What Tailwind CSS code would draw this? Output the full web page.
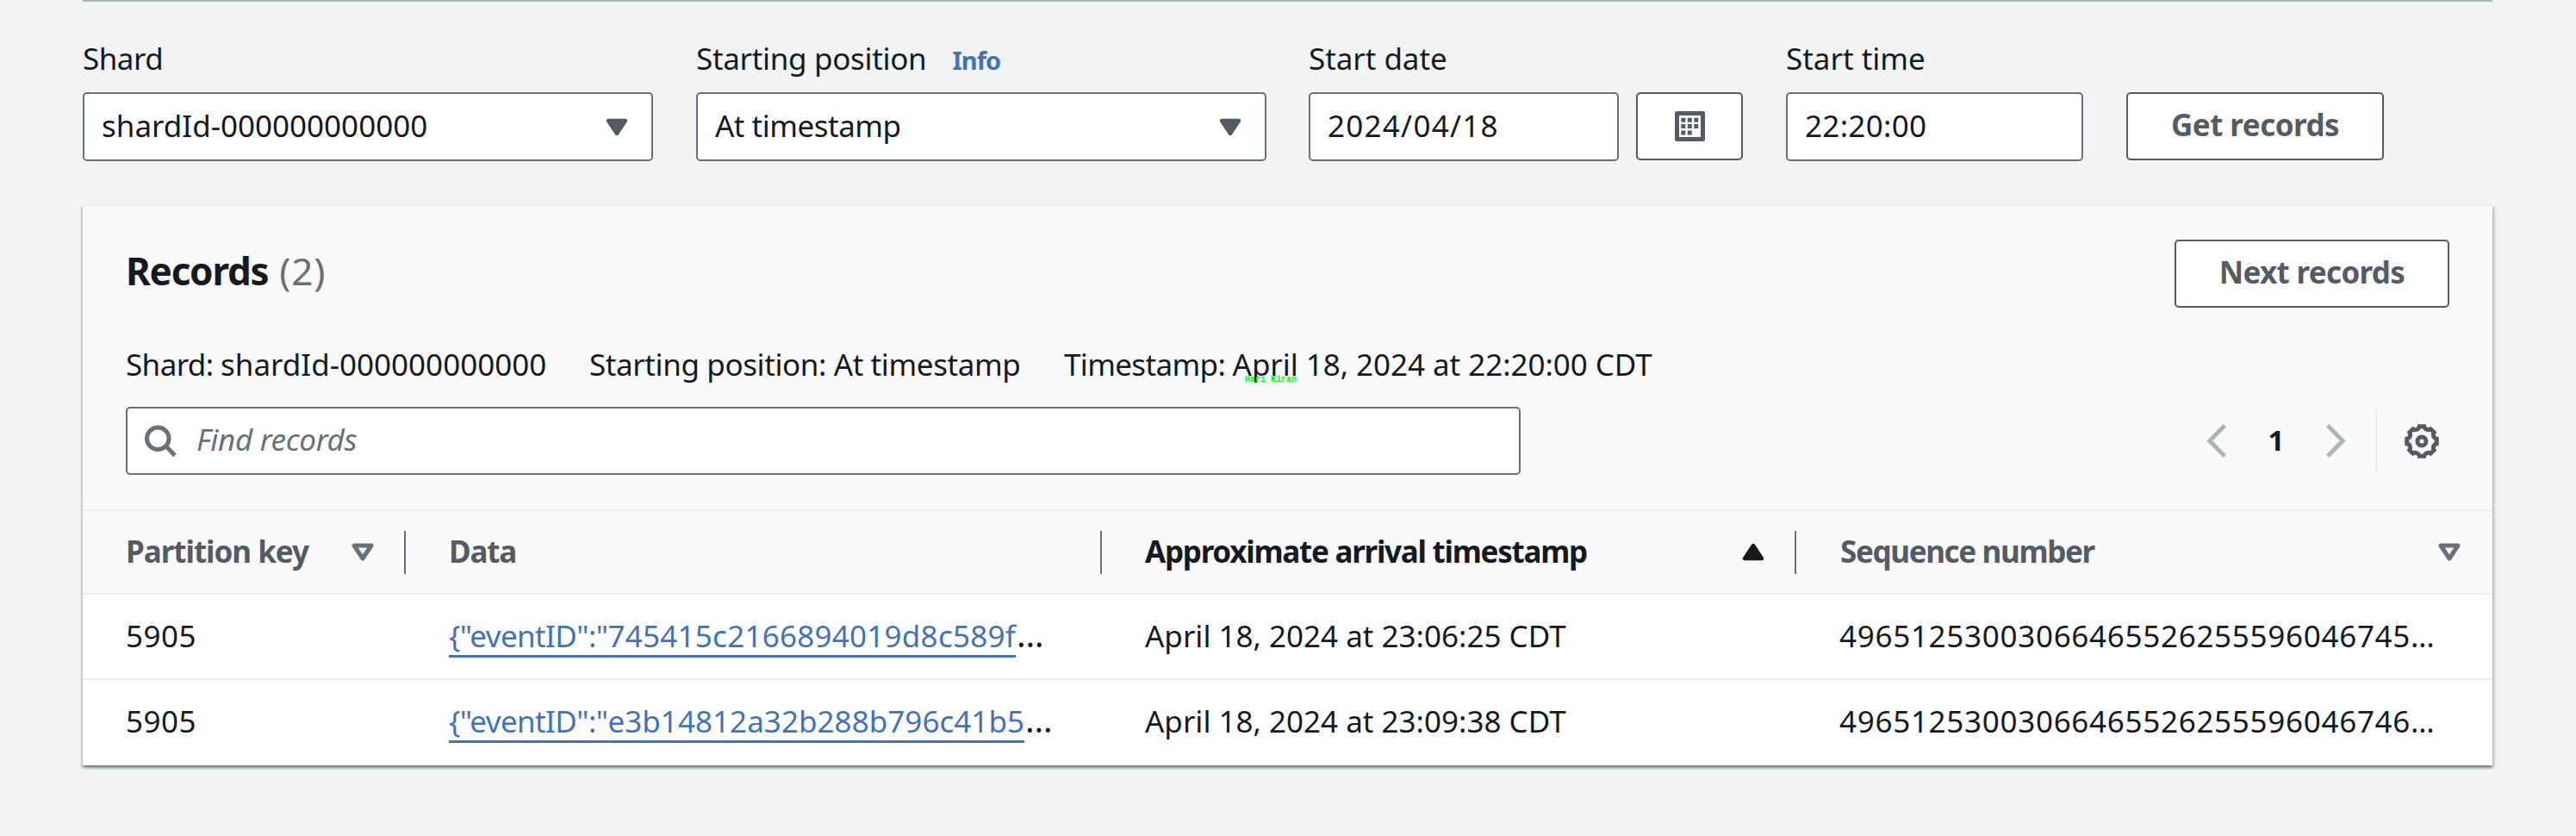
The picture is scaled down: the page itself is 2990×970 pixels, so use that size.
<!DOCTYPE html>
<html lang="en">
<head>
<meta charset="utf-8">
<title>Records</title>
<script src="https://cdn.jsdelivr.net/npm/@tailwindcss/browser@4"></script>
</head>
<body class="min-h-[970px] w-[2990px] overflow-hidden bg-[#f2f4f3] px-24 font-['Noto_Sans',sans-serif] text-[35px] leading-[44px] text-[#16191f]">
<svg class="hidden">
  <symbol id="tri" viewBox="0 0 26 21"><path d="M3 3h20L13 18z" fill="currentColor" stroke="currentColor" stroke-width="4.5" stroke-linejoin="round"/></symbol>
  <symbol id="tri-up" viewBox="0 0 26 21"><path d="M3 18h20L13 3z" fill="currentColor" stroke="currentColor" stroke-width="4.5" stroke-linejoin="round"/></symbol>
  <symbol id="tri-open" viewBox="0 0 26 21"><path d="M3 3h20L13 18z" fill="none" stroke="currentColor" stroke-width="5" stroke-linejoin="round"/></symbol>
</svg>
<main class="w-[2797px] whitespace-nowrap border-t-2 border-[#aab7b8]">

  <!-- Query form -->
  <form class="flex h-[185px] items-end">
    <div class="w-[662px]">
      <label class="block h-[44px] tracking-[-0.5px]">Shard</label>
      <div class="mt-[17px] flex h-20 items-center justify-between rounded-[5px] border-2 border-[#687078] bg-white pl-[20px] pr-[27px]">
        <span class="pb-[2px]">shardId-000000000000</span>
        <svg class="h-[21px] w-[26px] text-[#545b64]"><use href="#tri"/></svg>
      </div>
    </div>
    <div class="ml-[50px] w-[662px]">
      <label class="flex h-[44px] items-baseline"><span class="tracking-[-0.32px]">Starting position</span><a class="ml-[30px] text-[29px] font-bold leading-[30px] tracking-[-0.9px] text-[#4472b6]">Info</a></label>
      <div class="mt-[17px] flex h-20 items-center justify-between rounded-[5px] border-2 border-[#687078] bg-white pl-[20px] pr-[27px]">
        <span class="pb-[2px] tracking-[-0.5px]">At timestamp</span>
        <svg class="h-[21px] w-[26px] text-[#545b64]"><use href="#tri"/></svg>
      </div>
    </div>
    <div class="ml-[49px]">
      <label class="block h-[44px] tracking-[-0.05px]">Start date</label>
      <div class="mt-[17px] flex gap-5">
        <div class="flex h-20 w-[360px] items-center rounded-[5px] border-2 border-[#687078] bg-white pl-[20px]"><span class="pb-[2px] tracking-[1.26px]">2024/04/18</span></div>
        <div class="flex h-[79px] w-[124px] items-center justify-center rounded-[5px] border-2 border-[#545b64] bg-white">
          <svg class="h-[35px] w-[35px] text-[#545b64]" viewBox="0 0 35 35" fill="currentColor">
            <path fill-rule="evenodd" d="M2 0h31a2 2 0 0 1 2 2v31a2 2 0 0 1-2 2H2a2 2 0 0 1-2-2V2a2 2 0 0 1 2-2zM5 5v25h25V5z"/>
            <path d="M7.3 7.7h5v5h-5zM14.8 7.7h5v5h-5zM22.3 7.7h5v5h-5zM7.3 15.1h5v5h-5zM14.8 15.1h5v5h-5zM22.3 15.1h5v5h-5zM7.3 22.6h5v5h-5zM14.8 22.6h5v5h-5z"/>
          </svg>
        </div>
      </div>
    </div>
    <div class="ml-[50px] w-[345px]">
      <label class="block h-[44px]">Start time</label>
      <div class="mt-[17px] flex h-20 items-center rounded-[5px] border-2 border-[#687078] bg-white pl-[20px]"><span class="pb-[2px] tracking-[0.3px]">22:20:00</span></div>
    </div>
    <button type="button" class="mb-px ml-[50px] flex h-[79px] w-[299px] items-center justify-center rounded-[5px] border-2 border-[#545b64] bg-white pb-[3px] font-bold tracking-[-0.54px] text-[#545b64]">Get records</button>
  </form>

  <!-- Records table -->
  <section class="mt-[50px] border-t-2 border-[#eaeded] bg-white shadow-[0_2.5px_2.5px_0_rgba(0,28,36,0.3),2.5px_2.5px_2.5px_0_rgba(0,28,36,0.15),-2.5px_2.5px_2.5px_0_rgba(0,28,36,0.15)]">
    <header class="border-b-2 border-[#eaeded] bg-[#fafafa] px-[50px] pb-10 pt-[39px]">
      <div class="flex h-[79px] items-center justify-between">
        <h2 class="flex items-baseline pb-[8px] text-[44px] font-bold tracking-[-1.24px]">Records<span class="ml-[13px] font-normal tracking-[0.8px] text-[#687078]">(2)</span></h2>
        <button type="button" class="flex h-[79px] w-[319px] items-center justify-center rounded-[5px] border-2 border-[#545b64] bg-white pb-[3px] font-bold tracking-[-0.68px] text-[#545b64]">Next records</button>
      </div>
      <div class="mt-[44px] flex">
        <span class="w-[538px]"><span class="tracking-[-0.6px]">Shard: </span>shardId-000000000000</span>
        <span class="w-[551px] tracking-[-0.4px]">Starting position: At timestamp</span>
        <span class="relative tracking-[-0.05px]"><span class="tracking-[-0.65px]">Timestamp: </span>April 18, 2024 at 22:20:00 CDT
          <span class="absolute left-[210px] top-[35px] font-['Liberation_Mono',monospace] text-[10px] font-bold leading-[10px] tracking-normal text-[#00ff00]">Hari Kiran</span>
        </span>
      </div>
      <div class="mt-[27px] flex h-[79px] items-center">
        <div class="flex h-[79px] w-[1619px] items-center rounded-[5px] border-2 border-[#687078] bg-white pl-[20px] text-[#687078]">
          <svg class="h-[38px] w-[38px]" viewBox="0 0 38 38" fill="none" stroke="currentColor" stroke-width="5"><circle cx="15.3" cy="15.7" r="12.8"/><path d="M24.5 24.5L35 35.5"/></svg>
          <span class="ml-[22px] pb-[3px] italic tracking-[-0.33px]">Find records</span>
        </div>
        <div class="ml-auto flex h-[79px] items-center pr-[12px]">
          <svg class="h-[39px] w-[23px] text-[#aab7b8]" viewBox="0 0 23 39" fill="none" stroke="currentColor" stroke-width="5"><path d="M21.3 1.7L3.8 19.5l17.5 17.8"/></svg>
          <span class="w-[116px] pb-[2px] text-center text-[33px] font-bold">1</span>
          <svg class="h-[39px] w-[23px] text-[#aab7b8]" viewBox="0 0 23 39" fill="none" stroke="currentColor" stroke-width="5"><path d="M1.7 1.7l17.5 17.8L1.7 37.3"/></svg>
          <span class="ml-[34px] h-[78px] w-[2px] bg-[#eaeded]"></span>
          <svg class="ml-[32px] h-10 w-10 text-[#545b64]" viewBox="0 0 40 40" fill="none" stroke="currentColor" stroke-width="5">
            <path d="M37.28 22.74A5 5 0 0 0 34.16 30.29L30.29 34.16A5 5 0 0 0 22.74 37.28L17.26 37.28A5 5 0 0 0 9.71 34.16L5.84 30.29A5 5 0 0 0 2.72 22.74L2.72 17.26A5 5 0 0 0 5.84 9.71L9.71 5.84A5 5 0 0 0 17.26 2.72L22.74 2.72A5 5 0 0 0 30.29 5.84L34.16 9.71A5 5 0 0 0 37.28 17.26Z"/>
            <circle cx="20" cy="20" r="5"/>
          </svg>
        </div>
      </div>
    </header>

    <div class="grid h-[97px] grid-cols-[375px_808px_806px_808px] border-b-2 border-[#eaeded] bg-[#fafafa] font-bold text-[#545b64]">
      <div class="flex items-center pl-[50px]"><span class="pb-px tracking-[-1.02px]">Partition key</span><svg class="ml-auto mr-[35px] h-[21px] w-[26px] text-[#687078]"><use href="#tri-open"/></svg><span class="h-[50px] w-[2px] bg-[#687078]"></span></div>
      <div class="flex items-center pl-[50px]"><span class="pb-px tracking-[-1.2px]">Data</span><span class="ml-auto h-[50px] w-[2px] bg-[#687078]"></span></div>
      <div class="flex items-center pl-[50px] text-[#16191f]"><span class="pb-px tracking-[-1.26px]">Approximate arrival timestamp</span><svg class="ml-auto mr-[35px] h-[21px] w-[26px]"><use href="#tri-up"/></svg><span class="h-[50px] w-[2px] bg-[#687078]"></span></div>
      <div class="flex items-center pl-[51px]"><span class="pb-px tracking-[-1.35px]">Sequence number</span><svg class="ml-auto mr-[37px] h-[21px] w-[26px] text-[#687078]"><use href="#tri-open"/></svg></div>
    </div>

    <div class="grid h-[99px] grid-cols-[375px_808px_806px_808px] items-center border-b-2 border-[#eaeded] pb-px">
      <div class="pl-[50px] tracking-[0.48px]">5905</div>
      <div class="pl-[50px]"><a class="text-[#4472b6] underline decoration-[3px] underline-offset-[9px] tracking-[0.25px] [text-decoration-skip-ink:none]"><span class="tracking-[-0.6px]">{"eventID":"</span>745415c2166894019d8c589f</a><span class="ml-px text-[40px] leading-none">…</span></div>
      <div class="pl-[50px]">April 18, 2024 at 23:06:25 CDT</div>
      <div class="pl-[50px] tracking-[0.7px]">49651253003066465526255596046745…</div>
    </div>
    <div class="grid h-[99px] grid-cols-[375px_808px_806px_808px] items-center pb-[3px]">
      <div class="pl-[50px] tracking-[0.48px]">5905</div>
      <div class="pl-[50px]"><a class="text-[#4472b6] underline decoration-[3px] underline-offset-[9px] tracking-[0.04px] [text-decoration-skip-ink:none]"><span class="tracking-[-0.6px]">{"eventID":"</span>e3b14812a32b288b796c41b5</a><span class="ml-px text-[40px] leading-none">…</span></div>
      <div class="pl-[50px]">April 18, 2024 at 23:09:38 CDT</div>
      <div class="pl-[50px] tracking-[0.7px]">49651253003066465526255596046746…</div>
    </div>
  </section>
</main>
</body>
</html>
